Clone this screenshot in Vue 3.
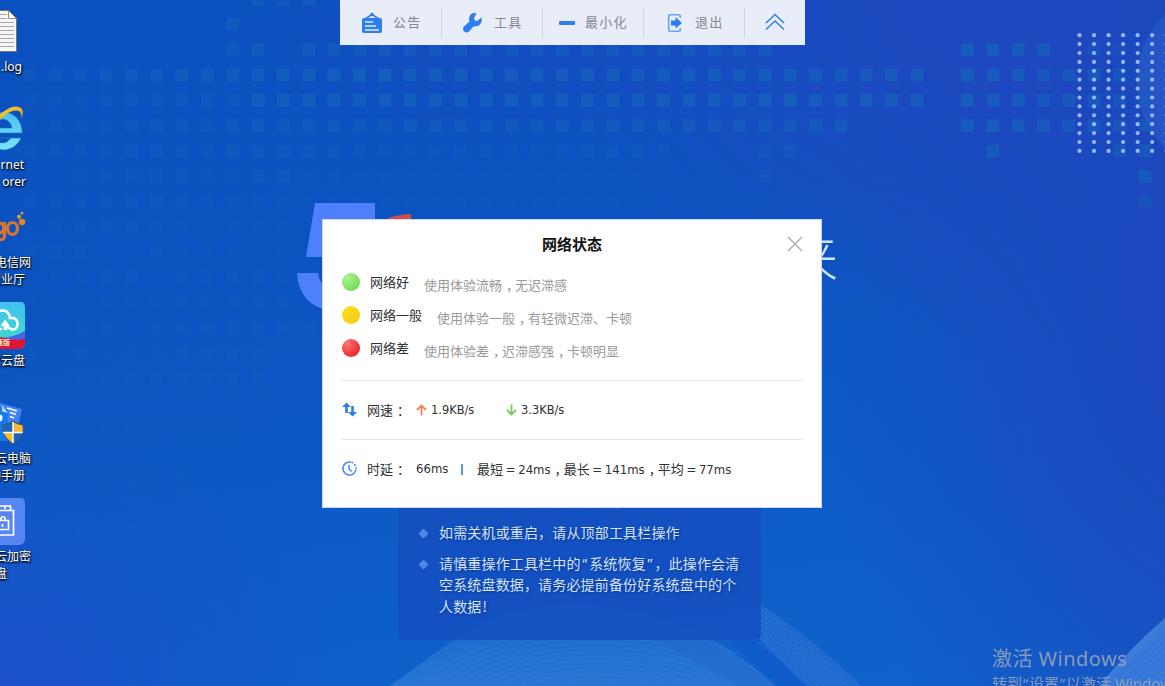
<script setup>
// Wallpaper squares: [row, first column, last column, opacity at start, opacity at end]
const runs = [
  [0, 9, 11, 0.5, 0.5], [1, 8, 8, 0.6, 0.6], [2, 8, 9, 0.5, 0.6], [2, 11, 29, 0.55, 0.55],
  [2, 37, 40, 0.8, 0.7], [2, 42, 44, 0.35, 0.3],
  [3, 0, 14, 0.35, 0.85], [3, 15, 35, 0.75, 0.65], [3, 37, 44, 0.8, 0.45],
  [4, 0, 8, 0.22, 0.35], [4, 9, 35, 0.7, 0.75], [4, 37, 44, 0.8, 0.45],
  [5, 0, 7, 0.12, 0.35], [5, 8, 32, 0.45, 0.6], [5, 37, 44, 0.8, 0.5],
  [6, 0, 7, 0.15, 0.3], [6, 8, 12, 0.45, 0.35], [6, 13, 25, 0.15, 0.3],
  [6, 29, 30, 0.4, 0.4], [6, 38, 38, 0.7, 0.7], [6, 43, 44, 0.6, 0.6],
  [7, 2, 10, 0.12, 0.35], [7, 11, 25, 0.1, 0.12], [7, 29, 29, 0.4, 0.4], [7, 44, 44, 0.7, 0.7],
  [8, 0, 9, 0.25, 0.18], [8, 10, 23, 0.12, 0.12], [8, 44, 44, 0.45, 0.45],
  [9, 1, 4, 0.25, 0.25], [9, 5, 10, 0.15, 0.12], [10, 0, 2, 0.2, 0.2], [10, 5, 10, 0.2, 0.12],
  [11, 1, 4, 0.15, 0.2], [11, 6, 10, 0.25, 0.15], [12, 0, 4, 0.15, 0.12], [12, 5, 10, 0.15, 0.15],
  [13, 1, 3, 0.12, 0.12], [13, 5, 11, 0.12, 0.18], [14, 0, 5, 0.12, 0.08], [14, 6, 9, 0.18, 0.12],
  [15, 2, 9, 0.1, 0.2], [17, 1, 8, 0.08, 0.12], [19, 0, 6, 0.1, 0.1], [21, 1, 5, 0.1, 0.08],
  [23, 0, 5, 0.1, 0.08], [25, 1, 3, 0.12, 0.1],
]
const squares = runs.flatMap(([row, a, b, o1, o2]) =>
  Array.from({ length: b - a + 1 }, (_, k) => ({
    x: 23.6 + (a + k) * 25.34,
    y: -7.3 + row * 25.3,
    o: 0.8 * (o1 + ((o2 - o1) * k) / Math.max(1, b - a)),
  })),
)
const dots = Array.from({ length: 98 }, (_, k) => ({
  x: 1079.5 + (k % 7) * 14.53,
  y: 35.2 + Math.floor(k / 7) * 8.9,
}))

const shortcuts = [
  { icon: 'log', lines: [['.log', 22]] },
  { icon: 'ie', lines: [['rnet', 24], ['orer', 26]] },
  { icon: 'go', lines: [['电信网', 31], ['营业厅', 25]] },
  { icon: 'cloud', lines: [['翼云盘', 25]] },
  { icon: 'manual', lines: [['云电脑', 31], ['助手册', 25]] },
  { icon: 'lock', lines: [['云加密', 31], ['盘', 7]] },
]
const tools = [
  { icon: 'board', text: '公告' },
  { icon: 'wrench', text: '工具' },
  { icon: 'min', text: '最小化' },
  { icon: 'exit', text: '退出' },
]
const states = [
  { cls: 'good', name: '网络好', parts: ['使用体验流畅', '无迟滞感'] },
  { cls: 'fair', name: '网络一般', parts: ['使用体验一般', '有轻微迟滞、卡顿'] },
  { cls: 'poor', name: '网络差', parts: ['使用体验差', '迟滞感强', '卡顿明显'] },
]
</script>

<template>
  <div class="desktop">
    <svg class="wallpaper" width="1165" height="686" viewBox="0 0 1165 686">
      <defs>
        <linearGradient id="wave" x1="0" y1="0" x2="0" y2="1">
          <stop offset="0" stop-color="#2b78d2" stop-opacity=".35" />
          <stop offset="1" stop-color="#2d7ad3" stop-opacity=".85" />
        </linearGradient>
        <linearGradient id="corner" x1="0" y1="0" x2="1" y2="1">
          <stop offset="0.3" stop-color="#4b8bd9" />
          <stop offset="0.6" stop-color="#3577d8" />
        </linearGradient>
        <radialGradient id="globe"><stop offset="0" stop-color="#2b66cf" /><stop offset="1" stop-color="#2857c7" /></radialGradient>
      </defs>
      <circle cx="1231" cy="81" r="94" fill="url(#globe)" opacity=".75" />
      <rect v-for="(s, i) in squares" :key="i" :x="s.x" :y="s.y" width="12.8" height="12.8" fill="#1668bd" :opacity="s.o" />
      <circle v-for="(d, i) in dots" :key="'d' + i" :cx="d.x" :cy="d.y" r="2.1" fill="#98b8f6" />
      <path d="M390 686 C425 662 445 641 500 616 C590 590 700 612 775 686 Z" fill="url(#wave)" />
      <g fill="none" stroke="#3c87da" stroke-width="1" opacity=".3">
        <ellipse v-for="n in 15" :key="n" :cx="588 + n" :cy="716" :rx="60 + n * 9" :ry="18 + n * 4.6" />
      </g>
      <path d="M655 640 L700 640 Q745 655 775 686 L740 686 Z" fill="#2468cc" opacity=".5" />
      <path d="M726 640 L762 640 L818 686 L780 686 Z" fill="#0f5ccb" />
      <path d="M760 604 Q815 640 862 686 L806 686 L760 640 Z" fill="#2b72d0" opacity=".6" />
      <g fill="none" stroke="#4686da" stroke-width="1" opacity=".4">
        <path v-for="n in 8" :key="n" :d="`M758 ${602 + n * 5} Q${808 - n} ${640 + n * 4} ${862 - n * 6} 688`" />
      </g>
      <path d="M1099 686 Q1130 648 1165 618 V686Z" fill="url(#corner)" />
      <g fill="none" stroke="#5b9ae6" opacity=".3">
        <path v-for="n in 7" :key="n" :d="`M${1106 + n * 7} 686 Q${1140 + n * 3} ${655 + n * 3} 1165 ${630 + n * 7}`" />
      </g>
      <path d="M315 203H375V225H330L326 257H306Z M297 273H318Q319 284 330 291V311Q299 305 297 273Z" fill="#4d80fa" />
      <path d="M378 224Q388 215 411 214V224Z" fill="#d44c50" />
    </svg>
    <span class="slogan">来</span>

    <nav class="shortcuts">
      <div v-for="s in shortcuts" :key="s.icon" class="shortcut">
        <svg class="pic" width="26" height="50" viewBox="0 2 26 50">
          <g v-if="s.icon === 'log'" transform="translate(0 1)">
            <path d="M-8 3.5H8.5L16.5 11.500V44.500H-8Z" fill="#f6f6f4" stroke="#77766f" />
            <path d="M8.500 3.500V11.500H16.500Z" fill="#fff" stroke="#8c8b84" />
            <path d="M0 7.500H7M0 11.500H7M0 15.500H14M0 19.500H14M0 23.500H14M0 27.500H14M0 31.500H14M0 35.500H14M0 39.500H14" stroke="#a9a9a4" />
          </g>
          <g v-else-if="s.icon === 'ie'">
            <defs>
              <linearGradient id="ieb" x1="0" y1="0" x2="0" y2="1"><stop offset="0" stop-color="#48bff0" /><stop offset="1" stop-color="#7be4ff" /></linearGradient>
              <linearGradient id="iey" x1="0" y1="0" x2="1" y2="1"><stop offset="0" stop-color="#ffd93a" /><stop offset="1" stop-color="#d69512" /></linearGradient>
            </defs>
            <path d="M2 8C15 8 22 17 22.200 29H-6V24H12C11 18 7 15 1 15L-8 18V12ZM-6 34H21C18 41 11 46 3 46Q-5 45-10 40V34Q-3 39 3 39Q7 39 11 34Z" fill="url(#ieb)" stroke="#1581bd" stroke-width=".6" />
            <path d="M-3 14C5 4 17-1 22 5Q24 8 21.500 15Q22 7 17 6.500Q9 6-1 17Z" fill="url(#iey)" />
          </g>
          <g v-else-if="s.icon === 'go'" transform="translate(0 -2)" fill="none" stroke="#da7530" stroke-width="3.200">
            <ellipse cx="12.500" cy="28.500" rx="5" ry="6" />
            <circle cx="-1" cy="28" r="5" /><path d="M4.500 22V36Q4 41-2 39" />
            <g stroke="none"><circle cx="22" cy="22" r="3.200" fill="#e58324" /><circle cx="19" cy="16.800" r="2" fill="#e9a42e" /><circle cx="22" cy="13" r="1.500" fill="#d79b35" /></g>
          </g>
          <g v-else-if="s.icon === 'cloud'">
            <defs>
              <linearGradient id="cl" x1="0" y1="0" x2="0" y2="1"><stop offset="0" stop-color="#43bff2" /><stop offset="1" stop-color="#3be0c4" /></linearGradient>
              <clipPath id="cc"><rect x="-20" y="1" width="45" height="48" rx="6" /></clipPath>
            </defs>
            <g clip-path="url(#cc)">
              <rect x="-20" y="1" width="45" height="48" fill="url(#cl)" />
              <path d="M0 38Q15 37 25 31V45H0Z" fill="#4a63e6" /><path d="M0 37Q14 41 25 39V49H0Z" fill="#e01533" />
              <path d="M-3 12Q8 7 10 18Q18 17 17.500 25Q16 31 11 29Q6 27 4.500 22M-2 29H2" fill="none" stroke="#fff" stroke-width="2.600" />
              <path d="M5 19.500L0.500 26H3.500V30H7.500V26H10Z" fill="#fff" />
            </g>
          </g>
          <g v-else-if="s.icon === 'manual'">
            <path d="M0 5L22 11L15 42L0 36Z" fill="#3f82f5" /><path d="M0 9L8 12V43H0Z" fill="#127bee" />
            <path d="M2 7L8 15L2 13.500Z" fill="#b4d1ff" />
            <path d="M7 10L17 13M10 14.500L16 16.500M10 18.500L14 20" fill="none" stroke="#fff" stroke-width="1.700" />
            <circle cx="-1" cy="20" r="3.500" fill="#fff" />
            <path d="M2.500 27Q9 26 13 23Q17 26 23 27Q24 40 13 46Q2 40 2.500 27Z" fill="#1768bd" stroke="#555" />
            <path d="M13 24Q17 27 22.500 27.500Q23 31 22.500 34H13ZM13 34V45Q6 41 3.500 34Z" fill="#fdb62f" />
            <path d="M13 24V45M3 34.500H22.500" stroke="#fff" stroke-width="1.400" />
          </g>
          <g v-else>
            <rect x="-20" y="1" width="45" height="48" rx="6" fill="#5686f4" />
            <path d="M-2 14.500H13.500V39H-2M-2 10H10.500V14M5 10V13M1 24V22Q3 19 5 22V24M-2 24.500H8.500V33.500H-2M2.500 28V31" fill="none" stroke="#fff" stroke-width="1.700" />
          </g>
        </svg>
        <b v-if="s.icon === 'cloud'" class="ribbon">速版</b>
        <div v-for="l in s.lines" :key="l[0]" class="label" :style="{ width: l[1] + 'px' }"><span>{{ l[0] }}</span></div>
      </div>
    </nav>

    <section class="notice">
      <svg class="cut" width="186" height="4" viewBox="0 0 186 4"><path d="M1 2H183" stroke="#4b70b8" stroke-width="1.500" stroke-dasharray="5 3 2 4 7 2 3 6" opacity=".6" /></svg>
      <div class="tip"><i /><p>如需关机或重启，请从顶部工具栏操作</p></div>
      <div class="tip">
        <i />
        <p>请慎重操作工具栏中的<q>“</q>系统恢复<q>”</q>，此操作会清<br />空系统盘数据，请务必提前备份好系统盘中的个<br />人数据<span class="bang">!</span></p>
      </div>
    </section>

    <div class="watermark"><div class="big">激活 Windows</div><div class="small">转到<q>“</q>设置<q>”</q>以激活 Windows。</div></div>

    <header class="toolbar">
      <div v-for="t in tools" :key="t.icon" class="tool" :class="t.icon">
        <svg v-if="t.icon === 'board'" width="22" height="22" viewBox="0 0 22 22">
          <path d="M4 7L11 2.500L18 7" fill="none" stroke="#2d7ff0" stroke-width="1.500" /><circle cx="11" cy="2.500" r="1.800" fill="#2d7ff0" />
          <rect x="1" y="6" width="20" height="15" rx="2" fill="#2d7ff0" />
          <path d="M4 10H12M4 14H15M4 18H18" stroke="#dfeaff" stroke-width="1.300" />
        </svg>
        <svg v-else-if="t.icon === 'wrench'" width="22" height="22" viewBox="0 0 22 22">
          <path d="M14.500 1.300Q9 0 7.300 5Q6.800 8 7.500 9.500L2 14.500Q0 17 2 19.500Q4.500 21.500 7 19.500L11.500 14.500Q16 15 18.500 12Q20.500 9 19.500 5.300L16 8.500Q14 9.500 12.700 8Q11.500 6.500 12.500 5Z" fill="#2d7ff0" />
        </svg>
        <svg v-else-if="t.icon === 'min'" width="16" height="4" viewBox="0 0 16 4"><rect width="16" height="4" rx="1" fill="#2d7ff0" /></svg>
        <svg v-else width="16" height="20" viewBox="0 0 16 20">
          <path d="M13.300 5V3Q13.300 1.700 12 1.700H3Q1.700 1.700 1.700 3V17Q1.700 18.300 3 18.300H12Q13.300 18.300 13.300 17V15" fill="none" stroke="#68a2f5" stroke-width="1.600" />
          <path d="M4 7.500H8.500V4L15 10L8.500 15.500V12.500H4Z" fill="#2d7ff0" />
        </svg>
        <span>{{ t.text }}</span>
      </div>
      <i class="divider" />
      <svg class="fold" width="20" height="18" viewBox="0 0 20 18"><path d="M1 10L10 1.500L19 10M1 16.500L10 8L19 16.500" fill="none" stroke="#2d7ff0" stroke-width="1.500" /></svg>
    </header>

    <main class="dialog">
      <h1>网络状态</h1>
      <svg class="close" width="16" height="16" viewBox="0 0 16 16"><path d="M1 1L15 15M15 1L1 15" stroke="#aaa" stroke-width="1.400" /></svg>
      <ul class="states">
        <li v-for="s in states" :key="s.cls">
          <i :class="s.cls" /><span class="name">{{ s.name }}</span>
          <span class="desc"><template v-for="(p, i) in s.parts" :key="p"><span v-if="i" class="punct">，</span>{{ p }}</template></span>
        </li>
      </ul>
      <div class="row">
        <svg width="15" height="15" viewBox="0 0 15 15"><path d="M4.500 .5L9 5H5.800V11H3.200V5H0Z M10.500 14.500L6 10H9.200V4H11.800V10H15Z" fill="#2b7df0" /></svg>
        <span class="key">网速<span class="punct">：</span></span>
        <svg class="arrow" width="11" height="12" viewBox="0 0 11 12"><path d="M5.500 11.500V1.500M1 6L5.500 1.500L10 6" fill="none" stroke="#f48456" stroke-width="1.800" /></svg>
        <span class="rate">1.9KB/s</span>
        <svg class="arrow" width="11" height="12" viewBox="0 0 11 12"><path d="M5.500 .5V10.500M1 6L5.500 10.500L10 6" fill="none" stroke="#75cf5c" stroke-width="1.800" /></svg>
        <span class="rate">3.3KB/s</span>
      </div>
      <div class="row">
        <svg width="15" height="15" viewBox="0 0 15 15"><path d="M9 1.200A6.500 6.500 0 1 0 13.900 8.500" fill="none" stroke="#478bf3" stroke-width="1.600" /><path d="M9.500 1.300A6.500 6.500 0 0 1 14 8" fill="none" stroke="#478bf3" stroke-width="1.600" stroke-dasharray="2 1.400" /><path d="M7 4V8L9.800 10.500" fill="none" stroke="#478bf3" stroke-width="1.600" /></svg>
        <span class="key">时延<span class="punct">：</span></span>
        <span class="now">66ms</span><i class="bar" />
        <span class="stats">最短 = 24ms<span class="punct">，</span>最长 = 141ms<span class="punct">，</span>平均 = 77ms</span>
      </div>
    </main>
  </div>
</template>

<style>
body { margin: 0; overflow: hidden; }
</style>

<style scoped>
.desktop {
  position: relative; width: 1165px; height: 686px; overflow: hidden;
  font-family: "Noto Sans", "Noto Sans CJK SC", sans-serif;
  background:
    radial-gradient(ellipse 330px 260px at 0% 100%, #1b51c9 0%, rgba(27, 81, 201, 0) 100%),
    radial-gradient(ellipse 400px 620px at 105% 45%, #1c47be 20%, rgba(28, 71, 190, 0) 100%),
    radial-gradient(ellipse 480px 340px at 86% 0%, #1e48bf 20%, rgba(30, 72, 191, 0) 100%),
    radial-gradient(ellipse 300px 130px at 42% 5%, #144bc0 0%, rgba(20, 75, 192, 0) 100%),
    linear-gradient(170deg, #0a51bf 0%, #0b53c0 35%, #0e60cb 85%, #0f62cc 100%);
}
.wallpaper { position: absolute; left: 0; top: 0; }
.slogan { position: absolute; left: 786px; top: 228px; font: 300 52px/56px "Noto Sans CJK SC", sans-serif; color: #cfe5ff; }
p, h1, ul { margin: 0; padding: 0; list-style: none; }
q { quotes: none; display: inline-block; width: 8.6px; text-align: center; }
q::before, q::after { content: none; }

.shortcuts { position: absolute; left: 0; top: 8px; }
.shortcut { position: relative; height: 98px; }
.pic { display: block; }
.label { display: flex; justify-content: flex-end; white-space: nowrap; font-size: 12px; line-height: 17px; color: #fff; text-shadow: 1px 1px 2px #000, 0 1px 2px #012; }
.ribbon { position: absolute; left: -4px; top: 36px; font-size: 7px; line-height: 10px; color: #ffe9c0; }

.notice { position: absolute; left: 398px; top: 480px; width: 363px; height: 160px; box-sizing: border-box; padding: 28px 0 0 20px; border-radius: 6px; background: rgba(20, 80, 192, .88); color: #d4e4fb; }
.cut { display: block; margin: -2px 0 12px 20px; }
.tip { display: flex; gap: 11px; margin-bottom: 9px; }
.tip i { width: 7px; height: 7px; margin: 8px 1px 0 2px; flex: none; background: #4b8be6; transform: rotate(45deg); }
.tip p { font: 14px/21.500px "Noto Sans CJK SC", sans-serif; letter-spacing: .16px; white-space: nowrap; text-shadow: 1px 1px 3px rgba(0, 20, 80, .5); }
.bang { margin-left: 1px; }
.tip q { font-family: "Noto Sans", sans-serif; }

.watermark { position: absolute; left: 992px; top: 645px; color: rgba(160, 168, 184, .85); white-space: nowrap; }
.big { font-size: 20px; line-height: 27px; letter-spacing: .45px; }
.small { font-size: 15px; line-height: 22px; }
.small q { width: 7px; }

.toolbar { position: absolute; left: 340px; top: 0; width: 465px; height: 45px; display: flex; align-items: center; background: #e8edf8; }
.tool { box-sizing: border-box; width: 101px; height: 30px; display: flex; align-items: center; gap: 10px; padding-left: 20px; border-left: 1px solid #ced4e0; }
.tool:first-child { border-color: #dfe4ee; }
.tool.min { padding-left: 16px; }
.tool.exit { padding-left: 23px; gap: 12px; }
.tool span { margin-bottom: 2px; font-size: 13px; line-height: 20px; letter-spacing: 1.200px; color: #828894; white-space: nowrap; }
.divider { width: 1px; height: 30px; background: #ced4e0; }
.fold { margin: 0 0 2px 20px; }

.dialog { position: absolute; left: 322px; top: 219px; width: 500px; height: 289px; box-sizing: border-box; border: 1px solid #ccd6ea; padding: 13px 19px 0; background: #fff; color: #303133; }
h1 { font-size: 15px; line-height: 22px; font-weight: 700; text-align: center; color: #111; }
.close { position: absolute; right: 18px; top: 16px; }
.states { padding: 10px 0 16px; border-bottom: 1px solid #e2e3e5; }
.states li { height: 33px; display: flex; align-items: center; font-size: 13px; line-height: 20px; }
.states i { width: 18px; height: 18px; border-radius: 50%; margin-right: 10px; }
.good { background: radial-gradient(circle at 30% 25%, #aaf391, #6bd949 90%); }
.fair { background: linear-gradient(135deg, #ffe127, #f2c80b); }
.poor { background: radial-gradient(circle at 30% 25%, #ff7773, #ed1c22 85%); }
.desc { margin: 6px 0 0 15px; color: #999; }
.punct { font-family: "Noto Sans CJK SC", sans-serif; font-feature-settings: "halt"; margin: 0 2.500px 0 4px; }
.row { height: 58px; display: flex; align-items: center; font: 13px/20px "DejaVu Sans Condensed", "Noto Sans CJK SC", sans-serif; border-bottom: 1px solid #e2e3e5; white-space: nowrap; }
.row:last-child { border-bottom: 0; }
.row > svg:first-child { margin-bottom: 2px; }
.key { margin-left: 10px; width: 49px; }
.arrow { margin-right: 4px; }
.rate { width: 75px; font-size: 12.700px; }
.now { width: 45px; }
.bar { width: 2px; height: 11px; margin-right: 14px; background: #5d9bd5; }
.stats { word-spacing: -1px; }
</style>
